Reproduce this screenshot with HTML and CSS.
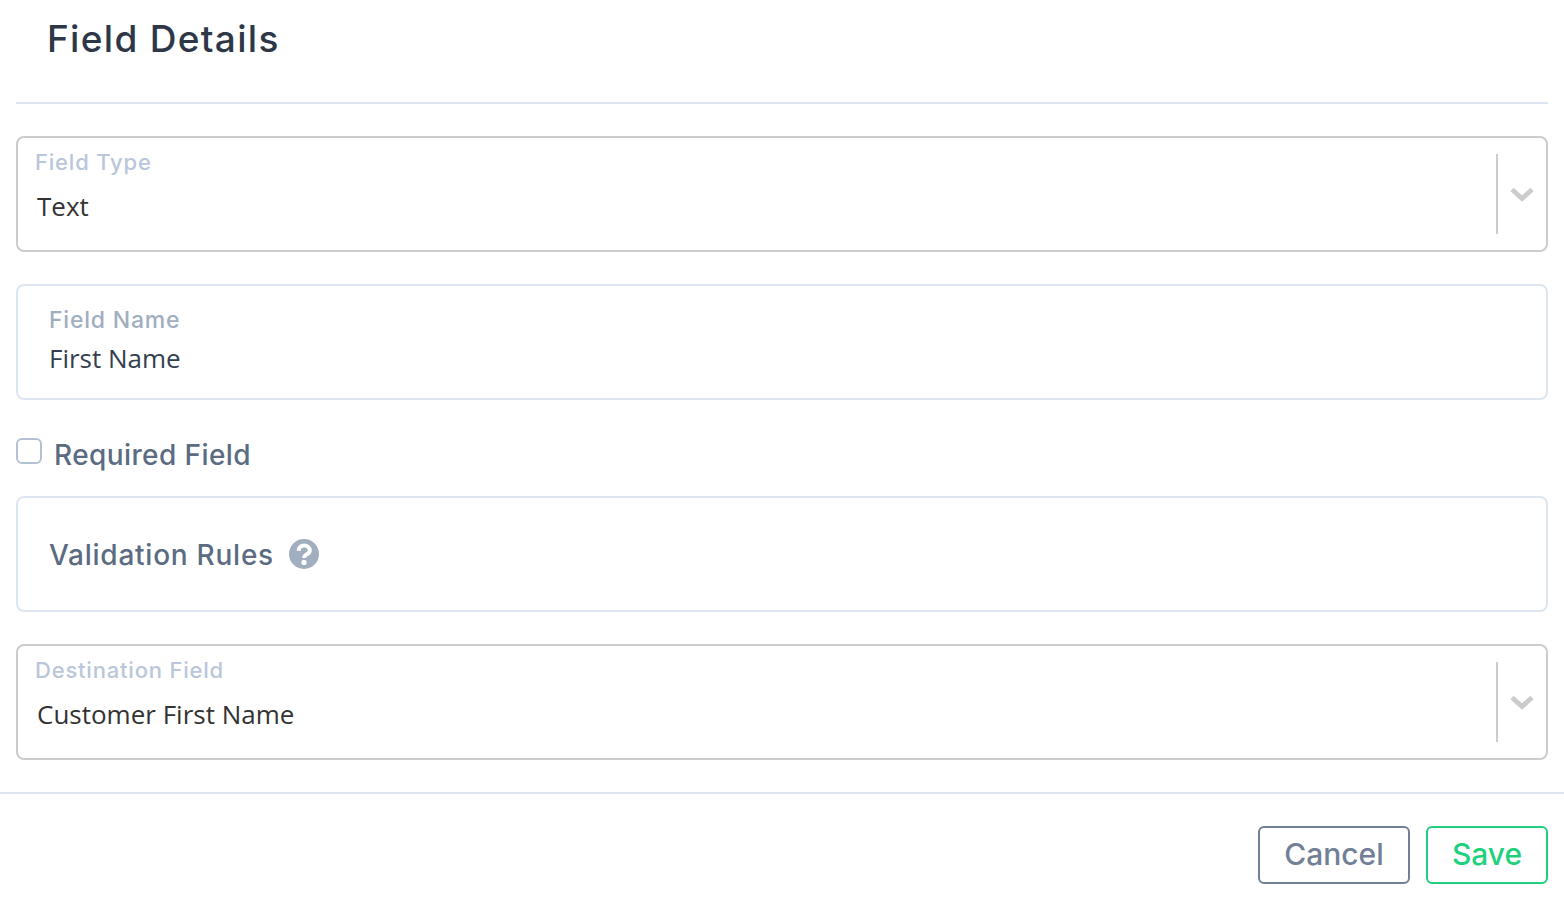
FILE: index.html
```html
<!DOCTYPE html>
<html>
<head>
    <title>Field Details</title>
    <link rel="stylesheet" href="styles.css">
</head>
<body>
    <div class="header">
        <h2>Field Details</h2>
    </div>
    <div class="form">
        <div class="select-box">
            <div class="select-value">
                <span class="select-label">Field Type</span>
                <span class="select-text">Text</span>
            </div>
            <div class="select-arrow">
                <svg width="26" height="16" viewBox="0 0 26 16"><path d="M3 3.5 13 12.5 23 3.5" fill="none" stroke="#cccccc" stroke-width="4.8"/></svg>
            </div>
        </div>
        <div class="input-box">
            <label class="input-label">Field Name</label>
            <span class="input-text">First Name</span>
        </div>
        <div class="check-row">
            <span class="checkbox"></span>
            <span class="check-label">Required Field</span>
        </div>
        <div class="rules-box">
            <span class="rules-label">Validation Rules</span>
            <svg class="help-icon" width="30" height="30" viewBox="0 0 30 30">
                <circle cx="15" cy="15" r="15" fill="#a0aec0"/>
                <path d="M9.6 11.8C9.8 8.6 12 6.6 15.2 6.6 18.4 6.6 20.8 8.6 20.8 11.4 20.8 15.2 16.8 14.8 15.6 17.2 15.3 17.8 15.2 18.4 15.2 19" fill="none" stroke="#ffffff" stroke-width="4"/>
                <circle cx="15" cy="23.4" r="2.6" fill="#ffffff"/>
            </svg>
        </div>
        <div class="select-box">
            <div class="select-value">
                <span class="select-label">Destination Field</span>
                <span class="select-text">Customer First Name</span>
            </div>
            <div class="select-arrow">
                <svg width="26" height="16" viewBox="0 0 26 16"><path d="M3 3.5 13 12.5 23 3.5" fill="none" stroke="#cccccc" stroke-width="4.8"/></svg>
            </div>
        </div>
    </div>
    <div class="footer">
        <button class="btn btn-cancel">Cancel</button>
        <button class="btn btn-save">Save</button>
    </div>
</body>
</html>
```

FILE: styles.css
```css
body {
    margin: 0;
    background-color: #ffffff;
    font-family: Inter, "Noto Sans", sans-serif;
}
h2 {
    margin: 0;
    font-size: 37px;
    line-height: 46px;
    font-weight: 500;
    letter-spacing: 1.3px;
    color: #2d3748;
}
.header {
    margin: 0 16px;
    height: 104px;
    padding: 16px 0 0 31px;
    box-sizing: border-box;
    border-bottom: 2px solid #dde6f0;
}
.form {
    padding: 32px 16px;
    display: flex;
    flex-direction: column;
    border-bottom: 2px solid #dde6f0;
}
.select-box {
    height: 116px;
    box-sizing: border-box;
    border: 2px solid #cccccc;
    border-radius: 8px;
    display: flex;
    align-items: center;
}
.select-value {
    flex: 1;
    padding-left: 17px;
    display: flex;
    flex-direction: column;
    height: 100%;
}
.select-label {
    margin-top: 12px;
    font-size: 22px;
    line-height: 24px;
    font-weight: 500;
    letter-spacing: 0.8px;
    color: #bac6d9;
}
.select-text {
    margin-top: 14px;
    padding-left: 2px;
    font-family: "Open Sans", sans-serif;
    font-size: 26px;
    line-height: 36px;
    color: #333333;
}
.select-arrow {
    width: 48px;
    height: 80px;
    border-left: 2px solid #cccccc;
    display: flex;
    align-items: center;
    justify-content: center;
}
.input-box {
    margin-top: 32px;
    height: 116px;
    box-sizing: border-box;
    border: 2px solid #dde6f0;
    border-radius: 8px;
    padding: 20px 31px 0;
    display: flex;
    flex-direction: column;
}
.input-label {
    font-size: 23px;
    line-height: 28px;
    font-weight: 500;
    letter-spacing: 0.8px;
    color: #a0aec0;
}
.input-text {
    margin-top: 6px;
    font-family: "Open Sans", sans-serif;
    font-size: 26px;
    line-height: 36px;
    color: #333f4f;
}
.check-row {
    margin-top: 38px;
    height: 58px;
    display: flex;
    align-items: flex-start;
}
.checkbox {
    width: 26px;
    height: 26px;
    box-sizing: border-box;
    border: 2px solid #b4c0d4;
    border-radius: 6px;
}
.check-label {
    margin-left: 12px;
    font-size: 28px;
    line-height: 34px;
    font-weight: 500;
    letter-spacing: 0.4px;
    color: #5a6b82;
}
.rules-box {
    height: 116px;
    box-sizing: border-box;
    border: 2px solid #dde6f0;
    border-radius: 8px;
    padding-left: 31px;
    display: flex;
    align-items: center;
}
.rules-label {
    padding-top: 2px;
    font-size: 28px;
    font-weight: 500;
    letter-spacing: 0.75px;
    color: #5a6b82;
}
.help-icon {
    margin-left: 15px;
}
.rules-box + .select-box {
    margin-top: 32px;
}
.footer {
    padding: 32px 16px 0;
    display: flex;
    justify-content: flex-end;
    gap: 16px;
}
.btn {
    height: 58px;
    padding: 0 0 2px;
    background: #ffffff;
    border-radius: 6px;
    border: 2px solid #718096;
    font-family: Inter, sans-serif;
    font-size: 30px;
    font-weight: 500;
    color: #718096;
    cursor: pointer;
}
.btn-cancel {
    width: 152px;
}
.btn-save {
    width: 122px;
    border-color: #1fd17f;
    color: #1fd17f;
}
```
